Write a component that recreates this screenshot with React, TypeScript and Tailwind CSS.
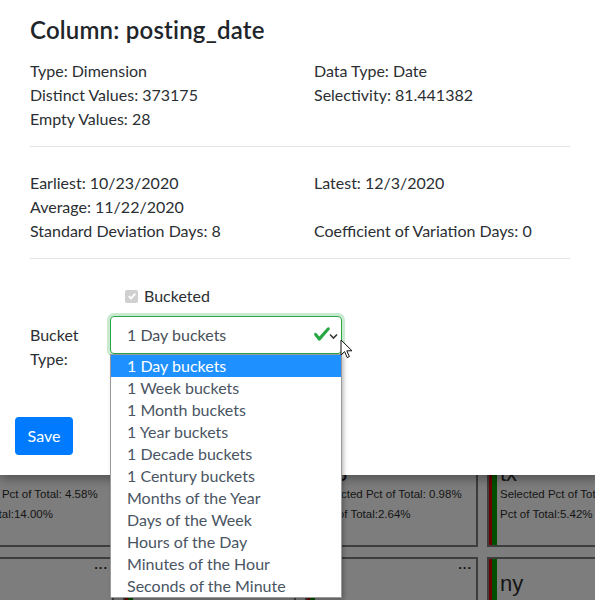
import React from 'react';

const bucketOptions = [
  '1 Day buckets',
  '1 Week buckets',
  '1 Month buckets',
  '1 Year buckets',
  '1 Decade buckets',
  '1 Century buckets',
  'Months of the Year',
  'Days of the Week',
  'Hours of the Day',
  'Minutes of the Hour',
  'Seconds of the Minute',
];

type Tile = { name: string; selected: string; total: string };

const rowOne: Tile[] = [
  { name: 'ca', selected: '4.58%', total: '14.00%' },
  { name: 'fl', selected: '1.12%', total: '6.31%' },
  { name: 'KS', selected: '0.98%', total: '2.64%' },
  { name: 'tx', selected: '1.87%', total: '5.42%' },
];

const rowTwo: Tile[] = [
  { name: 'il', selected: '0.00%', total: '4.10%' },
  { name: 'ga', selected: '0.00%', total: '3.22%' },
  { name: 'co', selected: '0.00%', total: '1.95%' },
  { name: 'ny', selected: '0.00%', total: '6.80%' },
];

function TileCard({ tile }: { tile: Tile }) {
  return (
    <div className="flex h-[100px] w-[173px] shrink-0 border-2 border-[#3d3d3d] font-['Liberation_Sans',Arial,sans-serif] text-[#141414]">
      <div className="w-[3px] bg-[#6a0000]" />
      <div className="w-[5px] bg-[#004f00]" />
      <div className="flex flex-1 flex-col pl-[3px] pr-[4px]">
        <div className="h-[15px] text-right text-[13px] font-bold leading-[12px] tracking-[1px]">...</div>
        <div className="text-[22px] leading-[20px]">{tile.name}</div>
        <div className="whitespace-nowrap text-[11.5px] leading-[20px]">Selected Pct of Total: {tile.selected}</div>
        <div className="whitespace-nowrap text-[11.5px] leading-[20px]">Pct of Total:{tile.total}</div>
      </div>
    </div>
  );
}

function Stat({ children }: { children: React.ReactNode }) {
  return <div className="h-[24px] leading-[24px]">{children}</div>;
}

export default function App() {
  return (
    <div className="relative h-[600px] w-[595px] overflow-hidden bg-[#7d7d7d]">
      {/* dimmed dashboard behind the dialog */}
      <div className="ml-[-59px] flex flex-col gap-[10px] pt-[447px]">
        <div className="flex gap-[9px]">
          {rowOne.map((t) => (
            <TileCard key={t.name} tile={t} />
          ))}
        </div>
        <div className="flex gap-[9px]">
          {rowTwo.map((t) => (
            <TileCard key={t.name} tile={t} />
          ))}
        </div>
      </div>

      {/* dialog */}
      <div className="absolute left-0 top-0 h-[475px] w-[600px] bg-white font-['Lato','Segoe_UI',sans-serif] text-[16px] text-[#2b2f33] shadow-[0_4px_10px_rgba(0,0,0,0.35)]">
        <div className="px-[30px] pt-[14px]">
          <h4 className="text-[24px] font-semibold leading-[32px] tracking-[0.2px] text-[#212529]">Column: posting_date</h4>
          <div className="mt-[13px] grid grid-cols-[284px_1fr]">
            <div>
              <Stat>Type: Dimension</Stat>
              <Stat>Distinct Values: 373175</Stat>
              <Stat>Empty Values: 28</Stat>
            </div>
            <div>
              <Stat>Data Type: Date</Stat>
              <Stat>Selectivity: 81.441382</Stat>
            </div>
          </div>
          <hr className="mt-[15px] w-[540px] border-t border-[#e4e4e4]" />
          <div className="mt-[24px] grid grid-cols-[284px_1fr]">
            <div>
              <Stat>Earliest: 10/23/2020</Stat>
              <Stat>Average: 11/22/2020</Stat>
              <Stat>Standard Deviation Days: 8</Stat>
            </div>
            <div>
              <Stat>Latest: 12/3/2020</Stat>
              <div className="h-[24px]" />
              <Stat>Coefficient of Variation Days: 0</Stat>
            </div>
          </div>
          <hr className="mt-[15px] w-[540px] border-t border-[#e4e4e4]" />

          <div className="mt-[25px] flex h-[24px] items-center pl-[95px]">
            <span className="mr-[6px] flex h-[13px] w-[13px] items-center justify-center rounded-[2px] bg-[#d0d0d0]">
              <svg width="10" height="10" viewBox="0 0 10 10">
                <path d="M1.8 5.2l2.2 2.2 4.3-4.8" fill="none" stroke="#fff" strokeWidth="1.8" />
              </svg>
            </span>
            <span>Bucketed</span>
          </div>

          <div className="mt-[8px] flex">
            <div className="w-[80px] pt-[7px] leading-[24px]">
              Bucket
              <br />
              Type:
            </div>
            <div className="relative">
              <div className="flex h-[38px] w-[232px] items-center rounded-[4px] border border-[#28a745] pl-[16px] text-[#495057] shadow-[0_0_0_3px_rgba(40,167,69,0.25)]">
                <span>1 Day buckets</span>
                <svg className="absolute left-[203px] top-[9px]" width="18" height="18" viewBox="0 0 8 8">
                  <path
                    fill="#28a745"
                    d="M2.3 6.73L.6 4.53c-.4-1.04.46-1.4 1.1-.8l1.1 1.4 3.4-3.8c.6-.63 1.6-.27 1.2.7l-4 4.6c-.43.5-.8.4-1.1.1z"
                  />
                </svg>
                <svg className="absolute left-[219px] top-[17px]" width="9" height="7" viewBox="0 0 9 7">
                  <path d="M1 1.5l3.5 3.5 3.5-3.5" fill="none" stroke="#3a3a3a" strokeWidth="1.6" />
                </svg>
              </div>
            </div>
          </div>

          <button className="ml-[-15px] mt-[46px] h-[38px] w-[58px] rounded-[4px] bg-[#007bff] text-[16px] text-white">
            Save
          </button>
        </div>
      </div>

      {/* open select list */}
      <ul className="absolute left-[110px] top-[354px] w-[232px] border border-[#9a9a9a] bg-white font-['Lato','Segoe_UI',sans-serif] text-[16px] text-[#4a5563] shadow-[2px_2px_4px_rgba(0,0,0,0.25)]">
        {bucketOptions.map((o, i) => (
          <li
            key={o}
            className={
              i === 0
                ? 'h-[22px] bg-[#1e90ff] pl-[16px] leading-[22px] text-white'
                : 'h-[22px] pl-[16px] leading-[22px]'
            }
          >
            {o}
          </li>
        ))}
      </ul>

      {/* mouse pointer */}
      <svg className="absolute left-[340px] top-[339px]" width="14" height="20" viewBox="0 0 14 20">
        <path d="M1 1v15l3.6-3.4 2.6 6 2.2-1-2.6-5.8H12z" fill="#fff" stroke="#111" strokeWidth="1" strokeLinejoin="round" />
      </svg>
    </div>
  );
}
